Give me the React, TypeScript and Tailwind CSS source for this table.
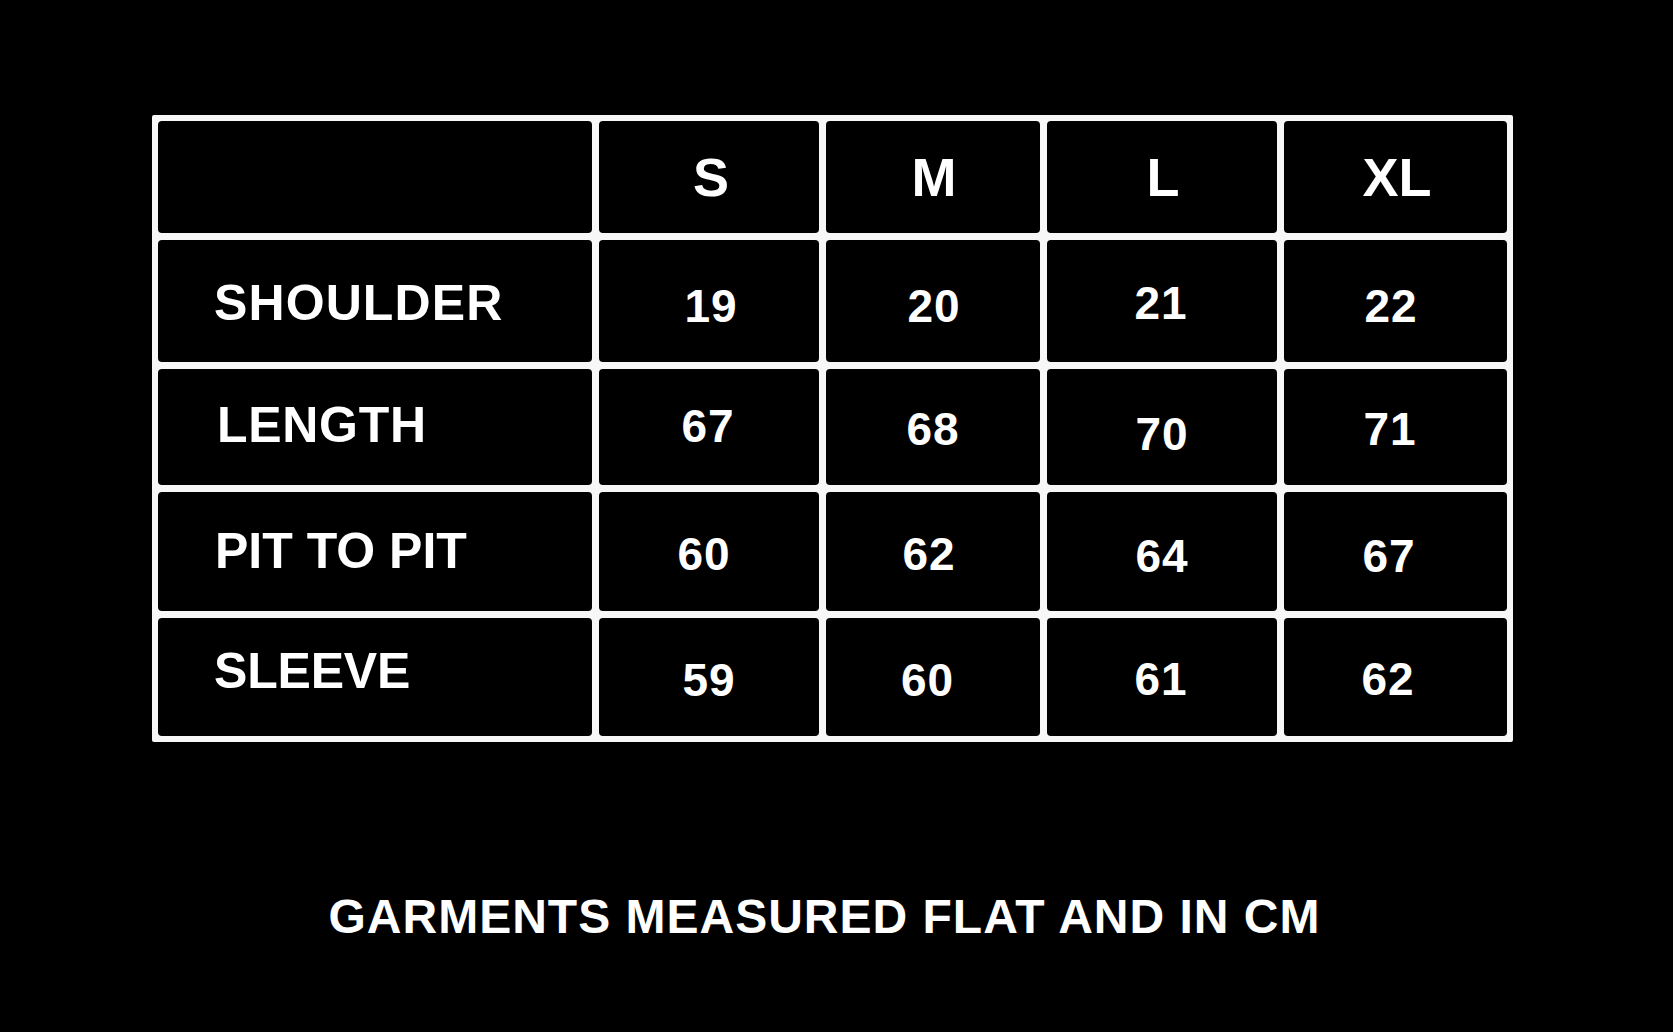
import React from "react";

type Cell = { v: string; c: string };

const header: Cell[] = [
  { v: "S", c: "pl-[4px]" },
  { v: "M", c: "pl-[2px]" },
  { v: "L", c: "pl-[2px]" },
  { v: "XL", c: "pl-[3px]" },
];

const rows: { label: string; lc: string; cells: Cell[] }[] = [
  {
    label: "SHOULDER",
    lc: "pl-[56px] pt-[3px] tracking-[1.1px]",
    cells: [
      { v: "19", c: "pl-[4px] pt-[10px]" },
      { v: "20", c: "pl-[2px] pt-[10px]" },
      { v: "21", c: "pr-[2px] pt-[4px]" },
      { v: "22", c: "pr-[9px] pt-[10px]" },
    ],
  },
  {
    label: "LENGTH",
    lc: "pl-[59px] pb-[4px] tracking-[0.7px]",
    cells: [
      { v: "67", c: "pr-[2px] pb-[3px]" },
      { v: "68", c: "pt-[3px]" },
      { v: "70", c: "pt-[13px]" },
      { v: "71", c: "pr-[11px] pt-[3px]" },
    ],
  },
  {
    label: "PIT TO PIT",
    lc: "pl-[57px] pb-[2px] tracking-[0px]",
    cells: [
      { v: "60", c: "pr-[10px] pt-[5px]" },
      { v: "62", c: "pr-[8px] pt-[5px]" },
      { v: "64", c: "pt-[9px]" },
      { v: "67", c: "pr-[13px] pt-[9px]" },
    ],
  },
  {
    label: "SLEEVE",
    lc: "pl-[56px] pb-[13px] tracking-[-0.2px]",
    cells: [
      { v: "59", c: "pt-[5px]" },
      { v: "60", c: "pr-[11px] pt-[6px]" },
      { v: "61", c: "pr-[2px] pt-[4px]" },
      { v: "62", c: "pr-[15px] pt-[4px]" },
    ],
  },
];

export default function App() {
  return (
    <div
      className="w-full min-h-screen h-[1032px] bg-black text-white flex flex-col"
      style={{ fontFamily: '"Liberation Sans", Arial, Helvetica, sans-serif' }}
    >
      <div className="pt-[115px] pl-[152px]">
        <div className="inline-grid bg-[#f7f7f7] p-[6px] gap-[7px] rounded-[2px] grid-cols-[434px_220px_214px_230px_223px] grid-rows-[112px_122px_116px_119px_118px]">
          <div className="bg-black rounded-[4px]" />
          {header.map((h) => (
            <div
              key={h.v}
              className={`bg-black rounded-[4px] flex items-center justify-center font-bold text-[54px] leading-none ${h.c}`}
            >
              {h.v}
            </div>
          ))}
          {rows.map((r) => (
            <React.Fragment key={r.label}>
              <div
                className={`bg-black rounded-[4px] flex items-center font-bold text-[50px] leading-none ${r.lc}`}
              >
                {r.label}
              </div>
              {r.cells.map((cell, i) => (
                <div
                  key={i}
                  className={`bg-black rounded-[4px] flex items-center justify-center font-bold text-[46px] leading-none tracking-[1px] ${cell.c}`}
                >
                  {cell.v}
                </div>
              ))}
            </React.Fragment>
          ))}
        </div>
      </div>
      <div className="mt-[151px] pr-[24px] flex justify-center">
        <div className="font-bold text-[48px] leading-none tracking-[1px] whitespace-nowrap">
          GARMENTS MEASURED FLAT AND IN CM
        </div>
      </div>
    </div>
  );
}
